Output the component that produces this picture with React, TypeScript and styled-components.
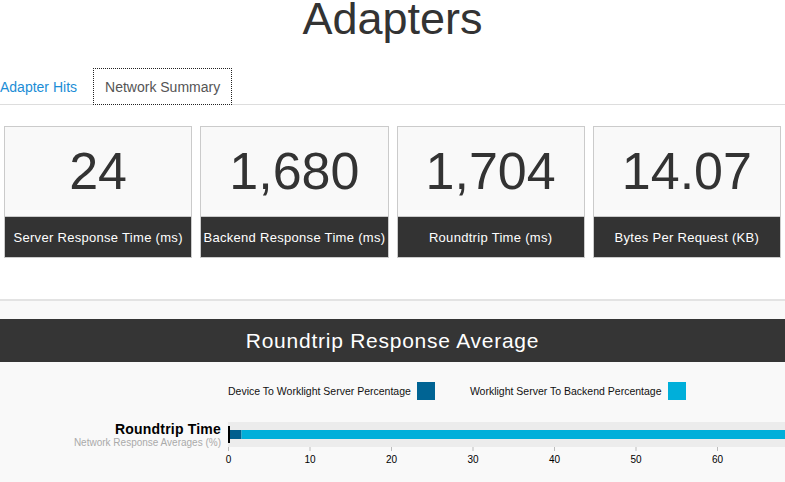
import React from "react";
import styled, { createGlobalStyle } from "styled-components";

const Global = createGlobalStyle`
  html, body { margin: 0; padding: 0; background: #fff; overflow: hidden; }
  body { font-family: "Liberation Sans", Arial, sans-serif; color: #333; width: 785px; }
`;

const Page = styled.div`
  width: 785px;
  height: 482px;
  overflow: hidden;
  display: flex;
  flex-direction: column;
`;

const Title = styled.h1`
  margin: -5px 0 0;
  font-size: 45px;
  line-height: 48px;
  font-weight: normal;
  text-align: center;
  color: #333;
`;

const TabList = styled.div`
  margin-top: 25px;
  display: flex;
  align-items: flex-end;
  border-bottom: 1px solid #ddd;
  height: 36px;
`;

const Tab = styled.div<{ $active?: boolean; $first?: boolean }>`
  box-sizing: border-box;
  height: ${(p) => (p.$active ? "37px" : "36px")};
  margin-bottom: ${(p) => (p.$active ? "-1px" : "0")};
  padding: 1px ${(p) => (p.$first ? "15px" : "11px")} 0 ${(p) => (p.$first ? "0" : "11px")};
  display: flex;
  align-items: center;
  font-size: 14px;
  color: ${(p) => (p.$active ? "#555" : "#1b8dd6")};
  background: ${(p) => (p.$active ? "#fff" : "transparent")};
  border: ${(p) => (p.$active ? "1px dotted #222" : "1px solid transparent")};
  ${(p) => (p.$first ? "border-left: 0;" : "")}
`;

const Cards = styled.div`
  margin-top: 21px;
  padding: 0 4px;
  display: grid;
  grid-template-columns: repeat(4, 1fr);
  column-gap: 8px;
`;

const Card = styled.div`
  border: 1px solid #cbcbcb;
  height: 132px;
  box-sizing: border-box;
  display: flex;
  flex-direction: column;
`;

const CardValue = styled.div`
  flex: 1;
  background: #f9f9f9;
  display: flex;
  align-items: center;
  justify-content: center;
  font-size: 52px;
  color: #333;
  padding-bottom: 2px;
`;

const CardLabel = styled.div`
  height: 40px;
  background: #333;
  border-top: 1px solid #cbcbcb;
  color: #fff;
  display: flex;
  align-items: center;
  justify-content: center;
  font-size: 13px;
  letter-spacing: 0.3px;
  white-space: nowrap;
  overflow: hidden;
`;

const Divider = styled.div`
  margin-top: 41px;
  height: 2px;
  background: #e3e3e3;
`;

const Section = styled.div`
  flex: 1;
  background: #f9f9f9;
  padding-top: 18px;
`;

const SectionHeader = styled.div`
  height: 43px;
  background: #353535;
  color: #fff;
  display: flex;
  align-items: center;
  justify-content: center;
  font-size: 21px;
  letter-spacing: 0.75px;
`;

const Legend = styled.div`
  margin-top: 20px;
  padding-left: 228px;
  display: flex;
  align-items: center;
  gap: 35px;
`;

const LegendItem = styled.div`
  display: flex;
  align-items: center;
  gap: 6px;
  font-size: 10.5px;
  color: #111;
`;

const Swatch = styled.span<{ $color: string }>`
  width: 18px;
  height: 18px;
  background: ${(p) => p.$color};
  display: inline-block;
`;

const ChartRow = styled.div`
  margin-top: 22px;
  display: flex;
  align-items: flex-start;
`;

const ChartLabel = styled.div`
  width: 221px;
  padding-right: 7px;
  padding-top: 0;
  text-align: right;
  flex-shrink: 0;
`;

const ChartTitle = styled.div`
  font-size: 14px;
  font-weight: bold;
  color: #000;
  line-height: 15px;
  letter-spacing: 0.2px;
`;

const ChartSub = styled.div`
  font-size: 10px;
  color: #aaa;
  line-height: 11px;
`;

const Plot = styled.svg`
  flex-shrink: 0;
  display: block;
  overflow: visible;
`;

const cards = [
  { value: "24", label: "Server Response Time (ms)" },
  { value: "1,680", label: "Backend Response Time (ms)" },
  { value: "1,704", label: "Roundtrip Time (ms)" },
  { value: "14.07", label: "Bytes Per Request (KB)" },
];

const SCALE = 8.15;
const devicePct = (24 / 1704) * 100;

export default function App() {
  const ticks = [0, 10, 20, 30, 40, 50, 60, 70, 80, 90, 100];
  return (
    <Page>
      <Global />
      <Title>Adapters</Title>
      <TabList>
        <Tab $first>Adapter Hits</Tab>
        <Tab $active>Network Summary</Tab>
      </TabList>
      <Cards>
        {cards.map((c) => (
          <Card key={c.label}>
            <CardValue>{c.value}</CardValue>
            <CardLabel>{c.label}</CardLabel>
          </Card>
        ))}
      </Cards>
      <Divider />
      <Section>
        <SectionHeader>Roundtrip Response Average</SectionHeader>
        <Legend>
          <LegendItem>
            Device To Worklight Server Percentage
            <Swatch $color="#006494" />
          </LegendItem>
          <LegendItem>
            Worklight Server To Backend Percentage
            <Swatch $color="#00afda" />
          </LegendItem>
        </Legend>
        <ChartRow>
          <ChartLabel>
            <ChartTitle>Roundtrip Time</ChartTitle>
            <ChartSub>Network Response Averages (%)</ChartSub>
          </ChartLabel>
          <Plot width={830} height={45}>
            <rect x={0} y={0} width={830} height={25} fill="#ececec" />
            <rect x={2} y={8} width={devicePct * SCALE} height={9} fill="#005f8e" />
            <rect
              x={2 + devicePct * SCALE}
              y={8}
              width={(100 - devicePct) * SCALE}
              height={9}
              fill="#00afda"
            />
            <rect x={0} y={4} width={2} height={17} fill="#000" />
            {ticks.map((t) => (
              <g key={t}>
                <line
                  x1={t * SCALE + 0.5}
                  x2={t * SCALE + 0.5}
                  y1={25}
                  y2={29}
                  stroke="#bbb"
                  strokeWidth={1}
                />
                <text
                  x={t * SCALE + 0.5}
                  y={41}
                  fontSize={10}
                  textAnchor="middle"
                  fill="#000"
                  fontFamily="Liberation Sans, Arial, sans-serif"
                >
                  {t}
                </text>
              </g>
            ))}
          </Plot>
        </ChartRow>
      </Section>
    </Page>
  );
}
